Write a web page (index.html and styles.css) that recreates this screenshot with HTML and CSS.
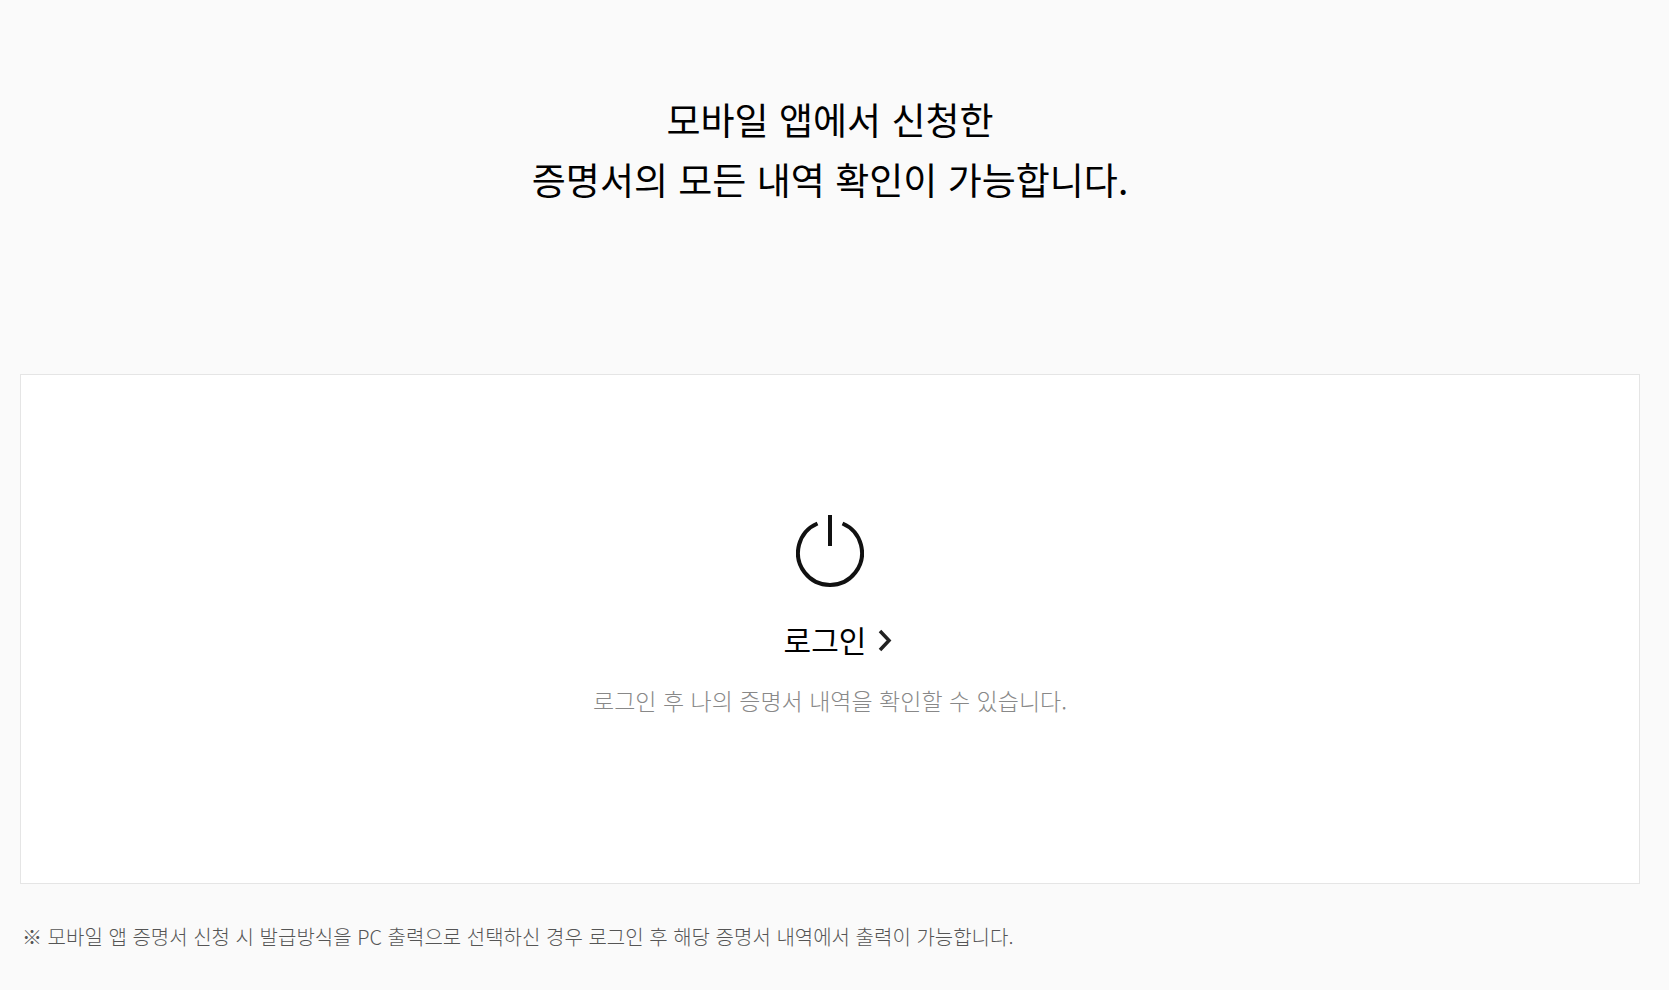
FILE: index.html
```html
<!DOCTYPE html>
<html lang="ko">
<head>
    <meta charset="UTF-8">
    <meta name="viewport" content="width=device-width, initial-scale=1.0">
    <title>증명서 내역</title>
    <link rel="stylesheet" href="styles.css">
</head>
<body>
    <main class="history">
        <h1 class="history-title">모바일 앱에서 신청한<br>증명서의 모든 내역 확인이 가능합니다.</h1>

        <!-- Login box -->
        <section class="login-box">
            <a href="#" class="login-link">
                <svg class="power-icon" viewBox="0 0 68 72" aria-hidden="true">
                    <path d="M21.5 8.5A32 32 0 1 0 46.5 8.5M34 0V31"></path>
                </svg>
                <span class="login-label">로그인
                    <svg class="arrow-icon" viewBox="0 0 14 22" aria-hidden="true">
                        <path d="M2 3L11 12.5L2 22"></path>
                    </svg>
                </span>
            </a>
            <p class="login-text">로그인 후 나의 증명서 내역을 확인할 수 있습니다.</p>
        </section>

        <p class="notice">※ 모바일 앱 증명서 신청 시 발급방식을 PC 출력으로 선택하신 경우 로그인 후 해당 증명서 내역에서 출력이 가능합니다.</p>
    </main>
</body>
</html>
```
FILE: styles.css
```css
body {
    margin: 0;
    background: #fafafa;
    color: #000;
    font-family: "Noto Sans CJK KR", sans-serif;
}
.history {
    padding: 89px 29px 30px 20px;
}
.history-title {
    margin: 0 0 165px;
    font-size: 37px;
    font-weight: 400;
    line-height: 60px;
    text-align: center;
}
.login-box {
    display: flex;
    flex-direction: column;
    align-items: center;
    padding: 140px 20px 165px;
    border: 1px solid #e5e5e5;
    background: #fff;
}
.login-link {
    display: flex;
    flex-direction: column;
    align-items: center;
    color: #000;
    text-decoration: none;
}
.power-icon {
    width: 68px;
    height: 72px;
    fill: none;
    stroke: #111;
    stroke-width: 4;
}
.login-label {
    display: flex;
    align-items: center;
    gap: 12px;
    margin: 32px 0 23px 16px;
    font-size: 30px;
    line-height: 40px;
}
.arrow-icon {
    width: 14px;
    height: 22px;
    overflow: visible;
    fill: none;
    stroke: #222;
    stroke-width: 3.5;
}
.login-text {
    margin: 0;
    color: #888;
    font-size: 23px;
    font-weight: 300;
    line-height: 36px;
    text-align: center;
}
.notice {
    margin: 37px 0 0 2px;
    color: #555;
    font-size: 20px;
    font-weight: 300;
    line-height: 32px;
}
```
